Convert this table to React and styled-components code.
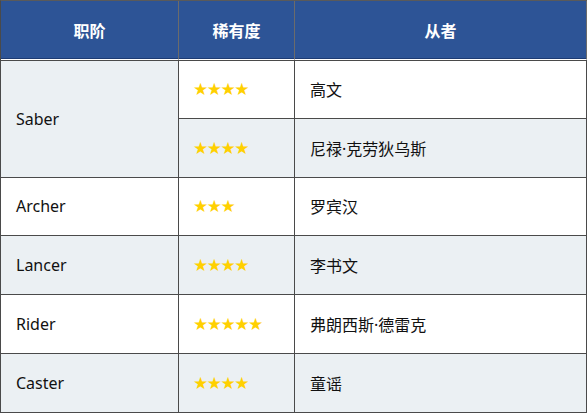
import React from "react";
import styled, { createGlobalStyle } from "styled-components";

const Global = createGlobalStyle`
  html, body { margin: 0; padding: 0; background: #ffffff; }
  body { font-family: "Noto Sans", "Noto Sans CJK SC", sans-serif; }
`;

const Table = styled.table`
  width: 586px;
  table-layout: fixed;
  border-collapse: separate;
  border-spacing: 0;
  border-top: 1px solid #5a5a5a;
  border-left: 1px solid #4a4a4a;
  font-size: 16px;
  color: #111;
`;

const Head = styled.th`
  box-sizing: border-box;
  width: ${(p) => p.$w}px;
  height: 59px;
  padding: 0;
  background: #2d5496;
  color: #ffffff;
  font-weight: 700;
  font-size: 16px;
  text-align: center;
  vertical-align: middle;
  border-right: 1px solid #6b6b6b;
  border-bottom: 1px solid #ffffff;
  box-shadow: inset 0 -1px 0 #1d3b73;
  font-family: "Noto Sans CJK SC", "Noto Sans", sans-serif;
`;

const Cell = styled.td`
  box-sizing: border-box;
  height: 58.8px;
  padding: 0 14px 0 15px;
  background: ${(p) => (p.$shade ? "#ebf0f3" : "#ffffff")};
  border-right: 1px solid #4a4a4a;
  border-bottom: 1px solid #4a4a4a;
  border-top: ${(p) => (p.$first ? "1px solid #4a4a4a" : "none")};
  text-align: left;
  vertical-align: middle;
  white-space: nowrap;
  font-size: 16px;
  font-family: "Noto Sans", "Noto Sans CJK SC", sans-serif;
`;

const Stars = styled.span`
  color: #ffd000;
  font-family: "DejaVu Sans", sans-serif;
  font-size: 17px;
  letter-spacing: -1.5px;
  margin-left: -1px;
`;

const rows = [
  { cls: "Saber", span: 2, stars: 4, name: "高文" },
  { stars: 4, name: "尼禄·克劳狄乌斯" },
  { cls: "Archer", stars: 3, name: "罗宾汉" },
  { cls: "Lancer", stars: 4, name: "李书文" },
  { cls: "Rider", stars: 5, name: "弗朗西斯·德雷克" },
  { cls: "Caster", stars: 4, name: "童谣" },
];

export default function App() {
  return (
    <>
      <Global />
      <Table>
        <thead>
          <tr>
            <Head $w={178}>职阶</Head>
            <Head $w={116}>稀有度</Head>
            <Head $w={292}>从者</Head>
          </tr>
        </thead>
        <tbody>
          {rows.map((r, i) => {
            const shade = i % 2 === 1;
            const first = i === 0;
            return (
              <tr key={i}>
                {r.cls && (
                  <Cell rowSpan={r.span || 1} $shade={r.span ? true : shade} $first={first}>
                    {r.cls}
                  </Cell>
                )}
                <Cell $shade={shade} $first={first}>
                  <Stars>{"★".repeat(r.stars)}</Stars>
                </Cell>
                <Cell $shade={shade} $first={first}>{r.name}</Cell>
              </tr>
            );
          })}
        </tbody>
      </Table>
    </>
  );
}
